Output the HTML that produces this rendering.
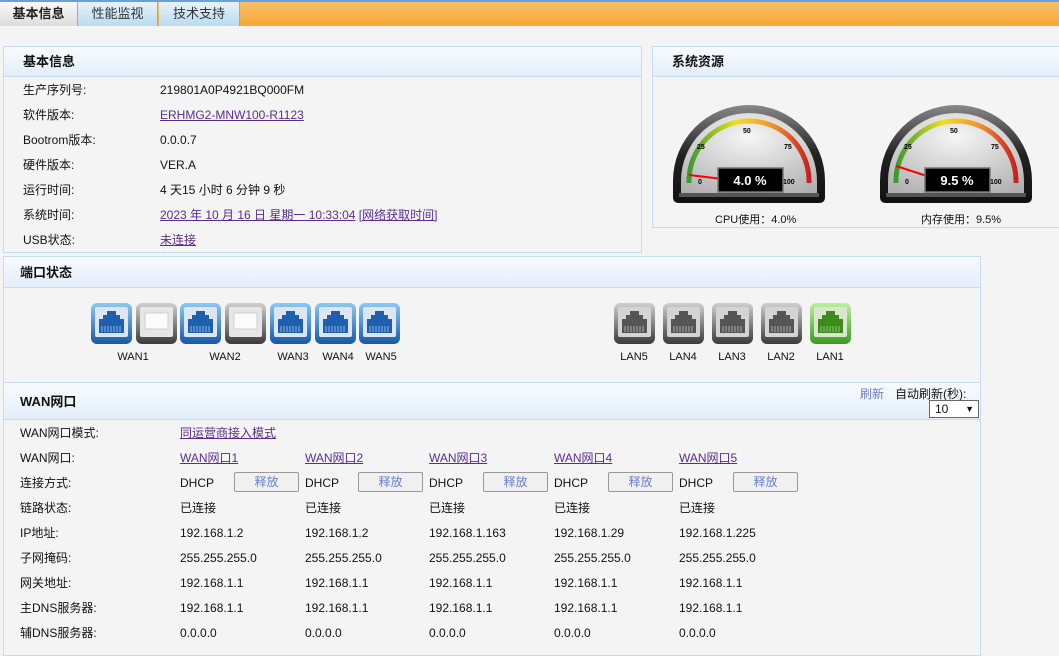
<!DOCTYPE html>
<html><head><meta charset="utf-8">
<style>
*{margin:0;padding:0;box-sizing:border-box}
body{width:1059px;height:649px;background:#f4f4f4;font-family:"Liberation Sans","Noto Sans CJK SC",sans-serif;font-size:12px;color:#111;position:relative;overflow:hidden}
.abs{position:absolute}
.topbar{left:0;top:0;width:1059px;height:26px;background:linear-gradient(#f9c06a,#f7a733);border-top:2px solid #6aa0d8}
.tab{top:2px;height:24px;line-height:24px;text-align:center;font-size:13px;color:#333;border-right:1px solid #e0a040}
.panel{border:1px solid #c5dcf2;background:#f4f4f4}
.hdr{position:absolute;left:0;right:0;top:0;background:linear-gradient(#f8fbfe,#e3eefa);border-bottom:1px solid #c5dcf2;font-weight:bold;font-size:13px}
.row{position:absolute;font-size:12px}
a{color:#5b2d8e;text-decoration:underline}
.btn{position:absolute;width:65px;height:20px;border:1px solid #999;border-radius:2px;background:#f0f0f0;color:#6a7fd0;text-align:center;line-height:18px;font-size:12px}
.ic{position:absolute;top:303px}
.lbl{position:absolute;top:351px;font-size:11px;text-align:center;width:50px}
</style></head><body>
<svg width="0" height="0" style="position:absolute">
<defs>
<linearGradient id="gb" x1="0" y1="0" x2="0" y2="1"><stop offset="0" stop-color="#8cc8f6"/><stop offset="1" stop-color="#1559a8"/></linearGradient>
<linearGradient id="gg" x1="0" y1="0" x2="0" y2="1"><stop offset="0" stop-color="#d0d0d0"/><stop offset="1" stop-color="#3a3a3a"/></linearGradient>
<linearGradient id="gn" x1="0" y1="0" x2="0" y2="1"><stop offset="0" stop-color="#bdf0a0"/><stop offset="1" stop-color="#3a9a20"/></linearGradient>
<symbol id="on" viewBox="0 0 41 41"><rect x="0" y="0" width="41" height="41" rx="6" fill="url(#gb)"/><rect x="4" y="4" width="33" height="30" rx="2" fill="#dde5ee"/><path d="M16 8h9v4h4v4h4v14H8V16h4v-4h4z" fill="#1e5fae"/><path d="M11 23v6M14 23v6M17 23v6M20 23v6M23 23v6M26 23v6M29 23v6" stroke="#8fb6e0" stroke-width="1"/></symbol>
<symbol id="off" viewBox="0 0 41 41"><rect x="0" y="0" width="41" height="41" rx="6" fill="url(#gg)"/><rect x="4" y="4" width="33" height="30" rx="2" fill="#e6e6e6"/><path d="M9 10h23v16H9z" fill="#fbfbfb" stroke="#cfcfcf"/></symbol>
<symbol id="gr" viewBox="0 0 41 41"><rect x="0" y="0" width="41" height="41" rx="6" fill="url(#gg)"/><rect x="4" y="4" width="33" height="30" rx="2" fill="#d4d4d4"/><path d="M16 8h9v4h4v4h4v14H8V16h4v-4h4z" fill="#555"/><path d="M11 23v6M14 23v6M17 23v6M20 23v6M23 23v6M26 23v6M29 23v6" stroke="#aaa" stroke-width="1"/></symbol>
<symbol id="gn1" viewBox="0 0 41 41"><rect x="0" y="0" width="41" height="41" rx="6" fill="url(#gn)"/><rect x="4" y="4" width="33" height="30" rx="2" fill="#d8e6d0"/><path d="M16 8h9v4h4v4h4v14H8V16h4v-4h4z" fill="#3d8a1e"/><path d="M11 23v6M14 23v6M17 23v6M20 23v6M23 23v6M26 23v6M29 23v6" stroke="#8fc870" stroke-width="1"/></symbol>
<linearGradient id="ar" x1="0" x2="1"><stop offset="0" stop-color="#3a9a30"/><stop offset=".4" stop-color="#f0e020"/><stop offset=".7" stop-color="#f09030"/><stop offset="1" stop-color="#c82020"/></linearGradient>
<radialGradient id="fc" cx=".5" cy=".3" r=".8"><stop offset="0" stop-color="#f6f6f6"/><stop offset="1" stop-color="#b0b0b0"/></radialGradient>
<linearGradient id="rim" x1="0" y1="0" x2="0" y2="1"><stop offset="0" stop-color="#888"/><stop offset=".5" stop-color="#222"/><stop offset="1" stop-color="#111"/></linearGradient>
<symbol id="gauge" viewBox="0 0 152 100">
<path d="M0 78 A76 76 0 0 1 152 78 L152 94 Q152 100 146 100 L6 100 Q0 100 0 94Z" fill="url(#rim)"/>
<path d="M8 78 A68 68 0 0 1 144 78 L144 90 L8 90Z" fill="url(#fc)"/>
<rect x="6" y="90" width="140" height="4" fill="#555"/>
<path d="M16 80 L16 78 A60 60 0 0 1 136 78 L136 80" fill="none" stroke="url(#ar)" stroke-width="5"/>
<text x="24" y="46" font-size="7" font-weight="bold" font-family="Liberation Sans">25</text>
<text x="70" y="30" font-size="7" font-weight="bold" font-family="Liberation Sans">50</text>
<text x="111" y="46" font-size="7" font-weight="bold" font-family="Liberation Sans">75</text>
<text x="25" y="81" font-size="7" font-weight="bold" font-family="Liberation Sans">0</text>
<text x="110" y="81" font-size="7" font-weight="bold" font-family="Liberation Sans">100</text>
</symbol>
</defs></svg>

<div class="abs topbar"></div>
<div class="abs tab" style="left:0;width:78px;background:linear-gradient(#fafafa,#dcdcdc);font-weight:bold;color:#222">基本信息</div>
<div class="abs tab" style="left:78px;width:80px;background:linear-gradient(#e6f3fb,#b9dcf0)">性能监视</div>
<div class="abs tab" style="left:159px;width:81px;background:linear-gradient(#e6f3fb,#b9dcf0)">技术支持</div>

<div class="abs panel" style="left:3px;top:46px;width:639px;height:207px">
<div class="hdr" style="height:30px;line-height:30px;padding-left:19px">基本信息</div>
</div>
<div class="row" style="left:23px;top:78px;line-height:25px">生产序列号:<br>软件版本:<br>Bootrom版本:<br>硬件版本:<br>运行时间:<br>系统时间:<br>USB状态:</div>
<div class="row" style="left:160px;top:78px;line-height:25px">219801A0P4921BQ000FM<br><a>ERHMG2-MNW100-R1123</a><br>0.0.0.7<br>VER.A<br>4 天15 小时 6 分钟 9 秒<br><a>2023 年 10 月 16 日 星期一 10:33:04</a> <a>[网络获取时间]</a><br><a>未连接</a></div>

<div class="abs panel" style="left:652px;top:46px;width:410px;height:182px">
<div class="hdr" style="height:30px;line-height:30px;padding-left:19px">系统资源</div>
</div>
<svg class="abs" style="left:673px;top:103px" width="152" height="100"><use href="#gauge"/>
<line x1="16" y1="72" x2="50" y2="76" stroke="#f00" stroke-width="2"/>
<rect x="45" y="65" width="65" height="24" fill="#000" stroke="#777" stroke-width="1.5"/>
<text x="77" y="82" fill="#fff" font-size="13" font-weight="bold" text-anchor="middle" font-family="Liberation Sans">4.0 %</text></svg>
<svg class="abs" style="left:880px;top:103px" width="152" height="100"><use href="#gauge"/>
<line x1="16" y1="63" x2="50" y2="74" stroke="#f00" stroke-width="2"/>
<rect x="45" y="65" width="65" height="24" fill="#000" stroke="#777" stroke-width="1.5"/>
<text x="77" y="82" fill="#fff" font-size="13" font-weight="bold" text-anchor="middle" font-family="Liberation Sans">9.5 %</text></svg>
<div class="row" style="left:715px;top:211px;font-size:11px">CPU使用：4.0%</div>
<div class="row" style="left:921px;top:211px;font-size:11px">内存使用：9.5%</div>

<div class="abs panel" style="left:3px;top:256px;width:978px;height:400px">
<div class="hdr" style="height:31px;line-height:31px;padding-left:16px">端口状态</div>
<div class="hdr" style="top:125px;height:38px;line-height:38px;padding-left:16px;border-top:1px solid #c5dcf2">WAN网口</div>
</div>
<div class="row" style="left:860px;top:385px;color:#6a7fd0">刷新</div>
<div class="row" style="left:895px;top:385px">自动刷新(秒):</div>
<div class="abs" style="left:929px;top:400px;width:50px;height:18px;border:1px solid #666;background:#fff;font-size:12px;line-height:16px;padding-left:5px">10<span style="position:absolute;right:4px;font-size:9px">&#9660;</span></div>

<svg class="ic" style="left:91px" width="41" height="41"><use href="#on"/></svg>
<svg class="ic" style="left:136px" width="41" height="41"><use href="#off"/></svg>
<svg class="ic" style="left:180px" width="41" height="41"><use href="#on"/></svg>
<svg class="ic" style="left:225px" width="41" height="41"><use href="#off"/></svg>
<svg class="ic" style="left:270px" width="41" height="41"><use href="#on"/></svg>
<svg class="ic" style="left:315px" width="41" height="41"><use href="#on"/></svg>
<svg class="ic" style="left:359px" width="41" height="41"><use href="#on"/></svg>
<div class="lbl" style="left:108px">WAN1</div><div class="lbl" style="left:200px">WAN2</div><div class="lbl" style="left:268px">WAN3</div><div class="lbl" style="left:313px">WAN4</div><div class="lbl" style="left:356px">WAN5</div>

<svg class="ic" style="left:614px" width="41" height="41"><use href="#gr"/></svg>
<svg class="ic" style="left:663px" width="41" height="41"><use href="#gr"/></svg>
<svg class="ic" style="left:712px" width="41" height="41"><use href="#gr"/></svg>
<svg class="ic" style="left:761px" width="41" height="41"><use href="#gr"/></svg>
<svg class="ic" style="left:810px" width="41" height="41"><use href="#gn1"/></svg>
<div class="lbl" style="left:609px">LAN5</div><div class="lbl" style="left:658px">LAN4</div><div class="lbl" style="left:707px">LAN3</div><div class="lbl" style="left:756px">LAN2</div><div class="lbl" style="left:805px">LAN1</div>

<div class="row" style="left:20px;top:421px;line-height:25px">WAN网口模式:<br>WAN网口:<br>连接方式:<br>链路状态:<br>IP地址:<br>子网掩码:<br>网关地址:<br>主DNS服务器:<br>辅DNS服务器:</div>
<div class="row" style="left:180px;top:421px;line-height:25px"><a>同运营商接入模式</a><br><a>WAN网口1</a><br>DHCP<br>已连接<br>192.168.1.2<br>255.255.255.0<br>192.168.1.1<br>192.168.1.1<br>0.0.0.0</div>
<div class="row" style="left:305px;top:446px;line-height:25px"><a>WAN网口2</a><br>DHCP<br>已连接<br>192.168.1.2<br>255.255.255.0<br>192.168.1.1<br>192.168.1.1<br>0.0.0.0</div>
<div class="row" style="left:429px;top:446px;line-height:25px"><a>WAN网口3</a><br>DHCP<br>已连接<br>192.168.1.163<br>255.255.255.0<br>192.168.1.1<br>192.168.1.1<br>0.0.0.0</div>
<div class="row" style="left:554px;top:446px;line-height:25px"><a>WAN网口4</a><br>DHCP<br>已连接<br>192.168.1.29<br>255.255.255.0<br>192.168.1.1<br>192.168.1.1<br>0.0.0.0</div>
<div class="row" style="left:679px;top:446px;line-height:25px"><a>WAN网口5</a><br>DHCP<br>已连接<br>192.168.1.225<br>255.255.255.0<br>192.168.1.1<br>192.168.1.1<br>0.0.0.0</div>
<div class="btn" style="left:234px;top:472px">释放</div>
<div class="btn" style="left:358px;top:472px">释放</div>
<div class="btn" style="left:483px;top:472px">释放</div>
<div class="btn" style="left:608px;top:472px">释放</div>
<div class="btn" style="left:733px;top:472px">释放</div>
</body></html>
